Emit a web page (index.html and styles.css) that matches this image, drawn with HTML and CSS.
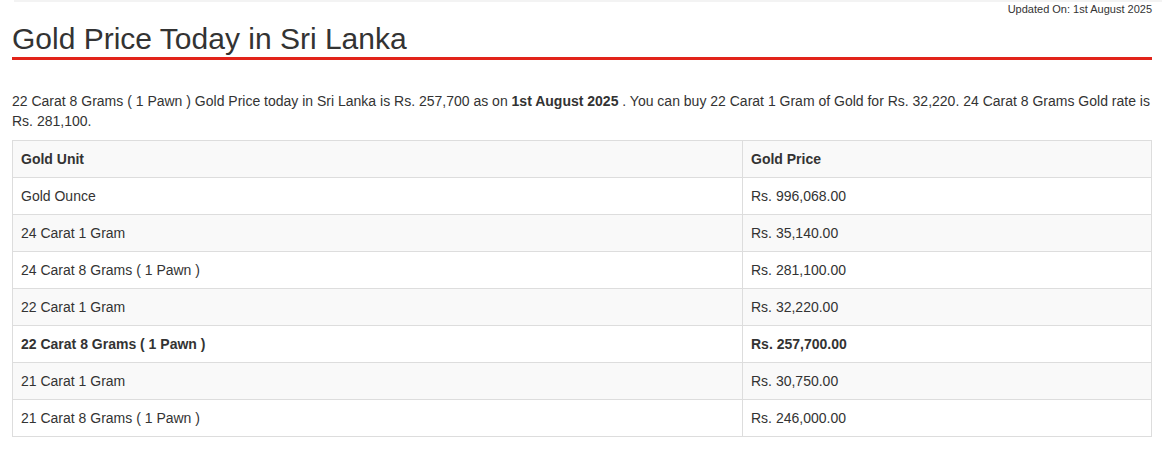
FILE: index.html
```html
<!DOCTYPE html>
<html lang="en">
<head>
    <meta charset="UTF-8">
    <meta name="viewport" content="width=device-width, initial-scale=1.0">
    <title>Gold Price Today in Sri Lanka</title>
    <link rel="stylesheet" href="styles.css">
</head>
<body>
    <div class="topbar"></div>
    <div class="container">
        <div class="updated">Updated On: 1st August 2025</div>
        <h1 class="title">Gold Price Today in Sri Lanka</h1>

        <p class="intro">22 Carat 8 Grams ( 1 Pawn ) Gold Price today in Sri Lanka is Rs. 257,700 as on <b>1st August 2025</b> . You can buy 22 Carat 1 Gram of Gold for Rs. 32,220. 24 Carat 8 Grams Gold rate is Rs. 281,100.</p>

        <table class="prices">
            <tr>
                <th class="unit">Gold Unit</th>
                <th>Gold Price</th>
            </tr>
            <tr>
                <td>Gold Ounce</td>
                <td>Rs. 996,068.00</td>
            </tr>
            <tr>
                <td>24 Carat 1 Gram</td>
                <td>Rs. 35,140.00</td>
            </tr>
            <tr>
                <td>24 Carat 8 Grams ( 1 Pawn )</td>
                <td>Rs. 281,100.00</td>
            </tr>
            <tr>
                <td>22 Carat 1 Gram</td>
                <td>Rs. 32,220.00</td>
            </tr>
            <tr class="highlight">
                <td>22 Carat 8 Grams ( 1 Pawn )</td>
                <td>Rs. 257,700.00</td>
            </tr>
            <tr>
                <td>21 Carat 1 Gram</td>
                <td>Rs. 30,750.00</td>
            </tr>
            <tr>
                <td>21 Carat 8 Grams ( 1 Pawn )</td>
                <td>Rs. 246,000.00</td>
            </tr>
        </table>
    </div>
</body>
</html>
```

FILE: styles.css
```css
body {
    font-family: "Liberation Sans", Arial, sans-serif;
    font-size: 14px;
    line-height: 20px;
    color: #333;
    margin: 0;
    background-color: #fff;
}
.topbar {
    height: 2px;
    margin-left: 14px;
    background-color: #f3f3f3;
}
.container {
    width: 1140px;
    padding-left: 12px;
}
.updated {
    text-align: right;
    font-size: 11px;
    line-height: 14px;
    margin-top: 0;
}
.title {
    font-size: 30px;
    font-weight: normal;
    line-height: 34px;
    margin: 6px 0 0 0;
    padding-bottom: 1px;
    border-bottom: 3px solid #e2231a;
}
.intro {
    margin: 31px 0 9px 0;
}
.prices {
    width: 100%;
    border-collapse: collapse;
    border: 1px solid #ddd;
}
.prices th,
.prices td {
    text-align: left;
    padding: 8px;
    border: 1px solid #ddd;
    line-height: 20px;
}
.prices th.unit {
    width: 713px;
}
.prices tr:nth-child(odd) {
    background-color: #f9f9f9;
}
.highlight td {
    font-weight: bold;
}
```
